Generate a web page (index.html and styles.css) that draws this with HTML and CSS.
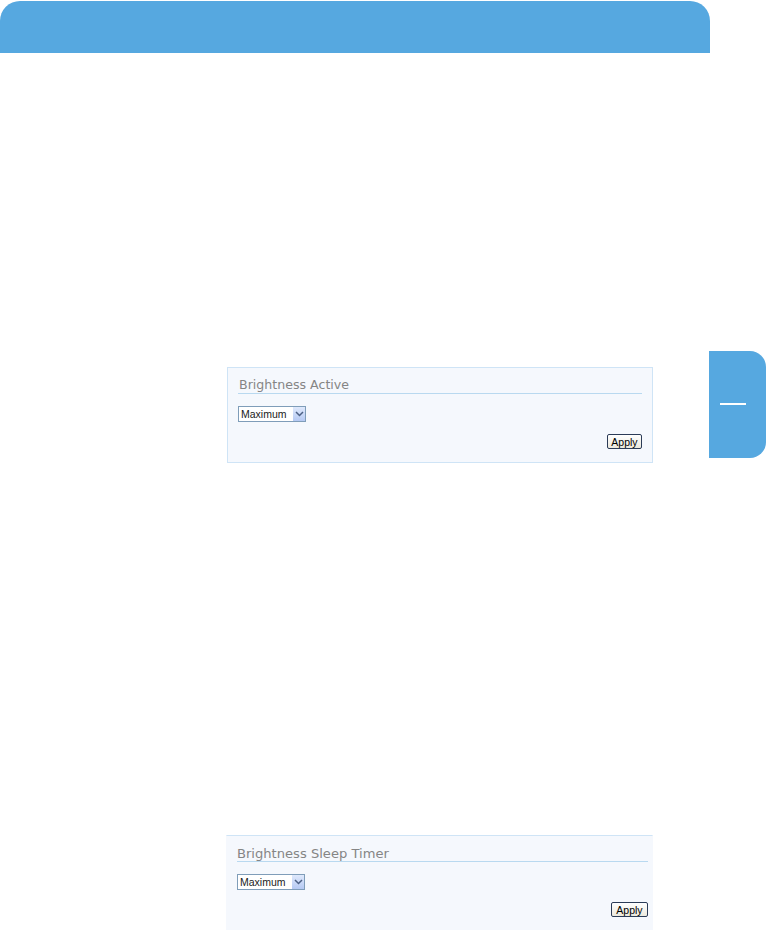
FILE: index.html
```html
<!DOCTYPE html>
<html lang="en">
<head>
    <meta charset="UTF-8">
    <title>Brightness</title>
    <link rel="stylesheet" href="styles.css">
</head>
<body>
    <header class="top-bar"></header>

    <div class="side-tab"><span class="tab-dash"></span></div>

    <main class="content">
        <section class="panel panel-active">
            <h2 class="panel-title">Brightness Active</h2>
            <div class="fake-select">
                <span class="select-text">Maximum</span>
                <span class="select-arrow">
                    <svg width="9" height="6" viewBox="0 0 9 6"><path d="M1 1 L4.5 4.5 L8 1" fill="none" stroke="#4d6185" stroke-width="1.5"/></svg>
                </span>
            </div>
            <div class="panel-actions">
                <button class="apply-btn">Apply</button>
            </div>
        </section>

        <section class="panel panel-sleep">
            <h2 class="panel-title">Brightness Sleep Timer</h2>
            <div class="fake-select">
                <span class="select-text">Maximum</span>
                <span class="select-arrow">
                    <svg width="9" height="6" viewBox="0 0 9 6"><path d="M1 1 L4.5 4.5 L8 1" fill="none" stroke="#4d6185" stroke-width="1.5"/></svg>
                </span>
            </div>
            <div class="panel-actions">
                <button class="apply-btn">Apply</button>
            </div>
        </section>
    </main>
</body>
</html>
```
FILE: styles.css
```css
/* page */
body {
    margin: 0;
    background-color: #ffffff;
    font-family: "Liberation Sans", Arial, sans-serif;
    position: relative;
    height: 930px;
    overflow: hidden;
}
.top-bar {
    margin-top: 1px;
    width: 710px;
    height: 52px;
    background-color: #56a8e0;
    border-radius: 20px 20px 0 0;
}
.side-tab {
    position: absolute;
    left: 709px;
    top: 351px;
    width: 57px;
    height: 107px;
    background-color: #56a8e0;
    border-radius: 0 16px 16px 0;
}
.tab-dash {
    position: absolute;
    left: 11px;
    top: 52px;
    width: 26px;
    height: 2px;
    background-color: #ffffff;
}
.content {
    display: flex;
    flex-direction: column;
}
.panel {
    background-color: #f5f8fd;
    border: 1px solid #cfe4f6;
    box-sizing: border-box;
}
.panel-active {
    margin-top: 314px;
    margin-left: 227px;
    width: 426px;
    height: 96px;
    padding: 9px 10px 0 10px;
}
.panel-sleep {
    margin-top: 372px;
    margin-left: 226px;
    width: 427px;
    height: 120px;
    border-left-color: transparent;
    border-right-color: transparent;
    padding: 10px 4px 0 10px;
}
.panel-title {
    margin: 0;
    font-family: "DejaVu Sans", Verdana, sans-serif;
    font-weight: normal;
    font-size: 12.6px;
    color: #858585;
    line-height: 16px;
    padding-left: 1px;
    border-bottom: 1px solid #b9d9f0;
}
.panel-sleep .panel-title {
    font-size: 13.1px;
    line-height: 15px;
    padding-left: 0;
}
.fake-select {
    margin-top: 12px;
    width: 68px;
    height: 16px;
    box-sizing: border-box;
    border: 1px solid #7f9db9;
    background-color: #ffffff;
    display: flex;
    align-items: center;
    justify-content: space-between;
    font-size: 10.5px;
    color: #1a1a1a;
}
.select-text {
    padding-left: 2px;
}
.select-arrow {
    width: 12px;
    height: 14px;
    background: linear-gradient(#dfe9fc, #b5c9f3);
    display: flex;
    align-items: center;
    justify-content: center;
}
.panel-actions {
    display: flex;
    justify-content: flex-end;
    margin-top: 12px;
}
.apply-btn {
    width: 35px;
    height: 15px;
    padding: 0;
    border: 1px solid #2b3b57;
    border-radius: 2px;
    background: linear-gradient(#ffffff, #ece9dd);
    font-family: "Liberation Sans", Arial, sans-serif;
    font-size: 10.5px;
    line-height: 12px;
    color: #000000;
}
.panel-sleep .apply-btn {
    width: 37px;
}
```
